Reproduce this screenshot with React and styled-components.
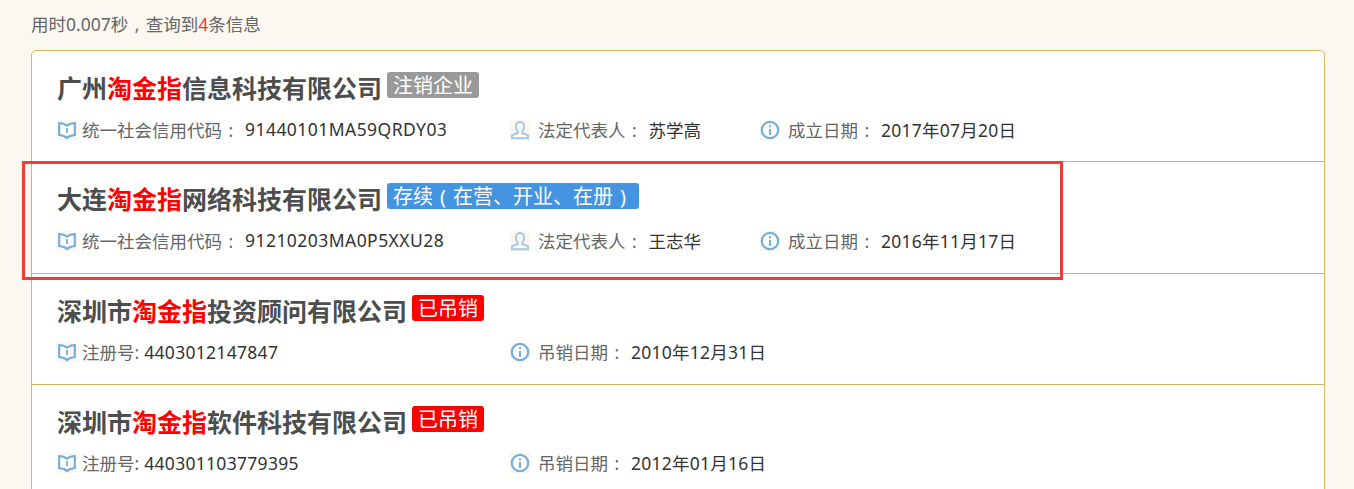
import React from 'react';
import styled, { createGlobalStyle } from 'styled-components';

const GlobalStyle = createGlobalStyle`
  html, body {
    margin: 0;
    height: 489px;
    overflow: hidden;
    background: #fbf8f1;
    font-family: "Noto Sans", "Noto Sans CJK SC", "Liberation Sans", sans-serif;
  }
`;

const Page = styled.div`
  position: relative;
  padding: 0 29px 0 31px;
`;

const Summary = styled.p`
  margin: 0;
  height: 50px;
  line-height: 48px;
  font-size: 17.5px;
  color: #666;
  em {
    font-style: normal;
    color: #e33a3a;
  }
`;

// full-width punctuation centred in its cell, as the reference draws it
const Punct = styled.span`
  display: inline-block;
  width: 1em;
  text-align: center;
`;

const List = styled.ul`
  list-style: none;
  margin: 0;
  padding: 0;
  background: #fff;
  border: 1px solid #dcb65f;
  border-radius: 5px;
`;

const Row = styled.li`
  box-sizing: border-box;
  height: 111.33px;
  padding: 19px 25px 0;
  border-bottom: 1px solid #d4b16a;
`;

const TitleLine = styled.div`
  display: flex;
  align-items: flex-start;
  gap: 5px;
  height: 40px;
`;

const Name = styled.h3`
  margin: 0;
  font-size: 25px;
  line-height: 37px;
  font-weight: 700;
  color: #4d4d4d;
  em {
    font-style: normal;
    color: #f00;
  }
`;

const Badge = styled.span`
  padding: 0 6px;
  height: 26px;
  margin-top: 2px;
  line-height: 28px;
  font-size: 20px;
  color: #fff;
  border-radius: 3px;
  background: ${p => p.$color};
  white-space: nowrap;
`;

const Meta = styled.div`
  display: flex;
  height: 30px;
  margin-top: 4px;
`;

const Field = styled.div`
  display: flex;
  align-items: center;
  flex: 0 0 ${p => p.$width}px;
  font-size: 17.5px;
  color: #666;
  white-space: nowrap;
`;

const Value = styled.span`
  color: #333;
  margin-left: ${p => p.$gap}px;
  letter-spacing: ${p => p.$tracking}px;
`;

const IconTile = styled.svg`
  width: 20px;
  height: 20px;
  margin: 1px ${p => p.$after}px 0 0;
  flex: none;
  background: #faf7ef;
`;

const BookIcon = () => (
  <IconTile $after={5} viewBox="0 0 20 20" fill="none" stroke="#76aedb" strokeWidth="2.2">
    <path d="M2.2 3.2 Q7 3.2 10 5.6 Q13 3.2 17.8 3.2 V15 Q12.5 15.5 10 18 Q7.5 15.5 2.2 15 Z" fill="#fff" />
    <path d="M10 8 V13" strokeWidth="1.8" />
  </IconTile>
);

const UserIcon = () => (
  <IconTile $after={8} viewBox="0 0 20 20" fill="none" stroke="#a4c8e6" strokeWidth="2">
    <path d="M6 7 Q6 2 10 2 Q14 2 14 7 Q14 10 12.2 11.6 V13 L18 15.4 V18.2 H2 V15.4 L7.8 13 V11.6 Q6 10 6 7 Z" fill="#fff" />
  </IconTile>
);

const InfoIcon = () => (
  <IconTile $after={8} viewBox="0 0 20 20" fill="none" stroke="#76aedb" strokeWidth="2.2">
    <circle cx="10" cy="10" r="8.2" fill="#fff" />
    <path d="M10 9 V15" strokeWidth="2" />
    <path d="M10 5.2 V7.2" strokeWidth="2" />
  </IconTile>
);

const icons = { book: BookIcon, user: UserIcon, info: InfoIcon };

const Callout = styled.div`
  position: absolute;
  left: 22px;
  top: 161px;
  width: 1041px;
  height: 119px;
  box-sizing: border-box;
  border: 3px solid #f63a3a;
  pointer-events: none;
`;

const companies = [
  {
    before: '广州',
    after: '信息科技有限公司',
    badge: '注销企业',
    color: '#999',
    fields: [
      { icon: 'book', label: '统一社会信用代码', colon: true, value: '91440101MA59QRDY03', width: 453, gap: 5.5, tracking: 0.45 },
      { icon: 'user', label: '法定代表人', colon: true, value: '苏学高', width: 250, gap: 5.5, tracking: 0 },
      { icon: 'info', label: '成立日期', colon: true, value: '2017年07月20日', gap: 5.5, tracking: 0.25 },
    ],
  },
  {
    before: '大连',
    after: '网络科技有限公司',
    badge: <>存续<Punct>(</Punct>在营、开业、在册<Punct>)</Punct></>,
    color: '#4594e2',
    fields: [
      { icon: 'book', label: '统一社会信用代码', colon: true, value: '91210203MA0P5XXU28', width: 453, gap: 5.5, tracking: 0.45 },
      { icon: 'user', label: '法定代表人', colon: true, value: '王志华', width: 250, gap: 5.5, tracking: 0 },
      { icon: 'info', label: '成立日期', colon: true, value: '2016年11月17日', gap: 5.5, tracking: 0.25 },
    ],
  },
  {
    before: '深圳市',
    after: '投资顾问有限公司',
    badge: '已吊销',
    color: '#f00',
    fields: [
      { icon: 'book', label: '注册号:', value: '4403012147847', width: 453, gap: 5, tracking: 0.3 },
      { icon: 'info', label: '吊销日期', colon: true, value: '2010年12月31日', gap: 5.5, tracking: 0.25 },
    ],
  },
  {
    before: '深圳市',
    after: '软件科技有限公司',
    badge: '已吊销',
    color: '#f00',
    fields: [
      { icon: 'book', label: '注册号:', value: '440301103779395', width: 453, gap: 5, tracking: 0.3 },
      { icon: 'info', label: '吊销日期', colon: true, value: '2012年01月16日', gap: 5.5, tracking: 0.25 },
    ],
  },
];

export default function App() {
  return (
    <Page>
      <GlobalStyle />
      <Summary>用时0.007秒<Punct>,</Punct>查询到<em>4</em>条信息</Summary>
      <List>
        {companies.map((c, i) => (
          <Row key={i}>
            <TitleLine>
              <Name>{c.before}<em>淘金指</em>{c.after}</Name>
              <Badge $color={c.color}>{c.badge}</Badge>
            </TitleLine>
            <Meta>
              {c.fields.map(f => {
                const Icon = icons[f.icon];
                return (
                  <Field key={f.label} $width={f.width}>
                    <Icon />
                    <span>{f.label}{f.colon && <Punct>:</Punct>}</span>
                    <Value $gap={f.gap} $tracking={f.tracking}>{f.value}</Value>
                  </Field>
                );
              })}
            </Meta>
          </Row>
        ))}
      </List>
      <Callout />
    </Page>
  );
}
